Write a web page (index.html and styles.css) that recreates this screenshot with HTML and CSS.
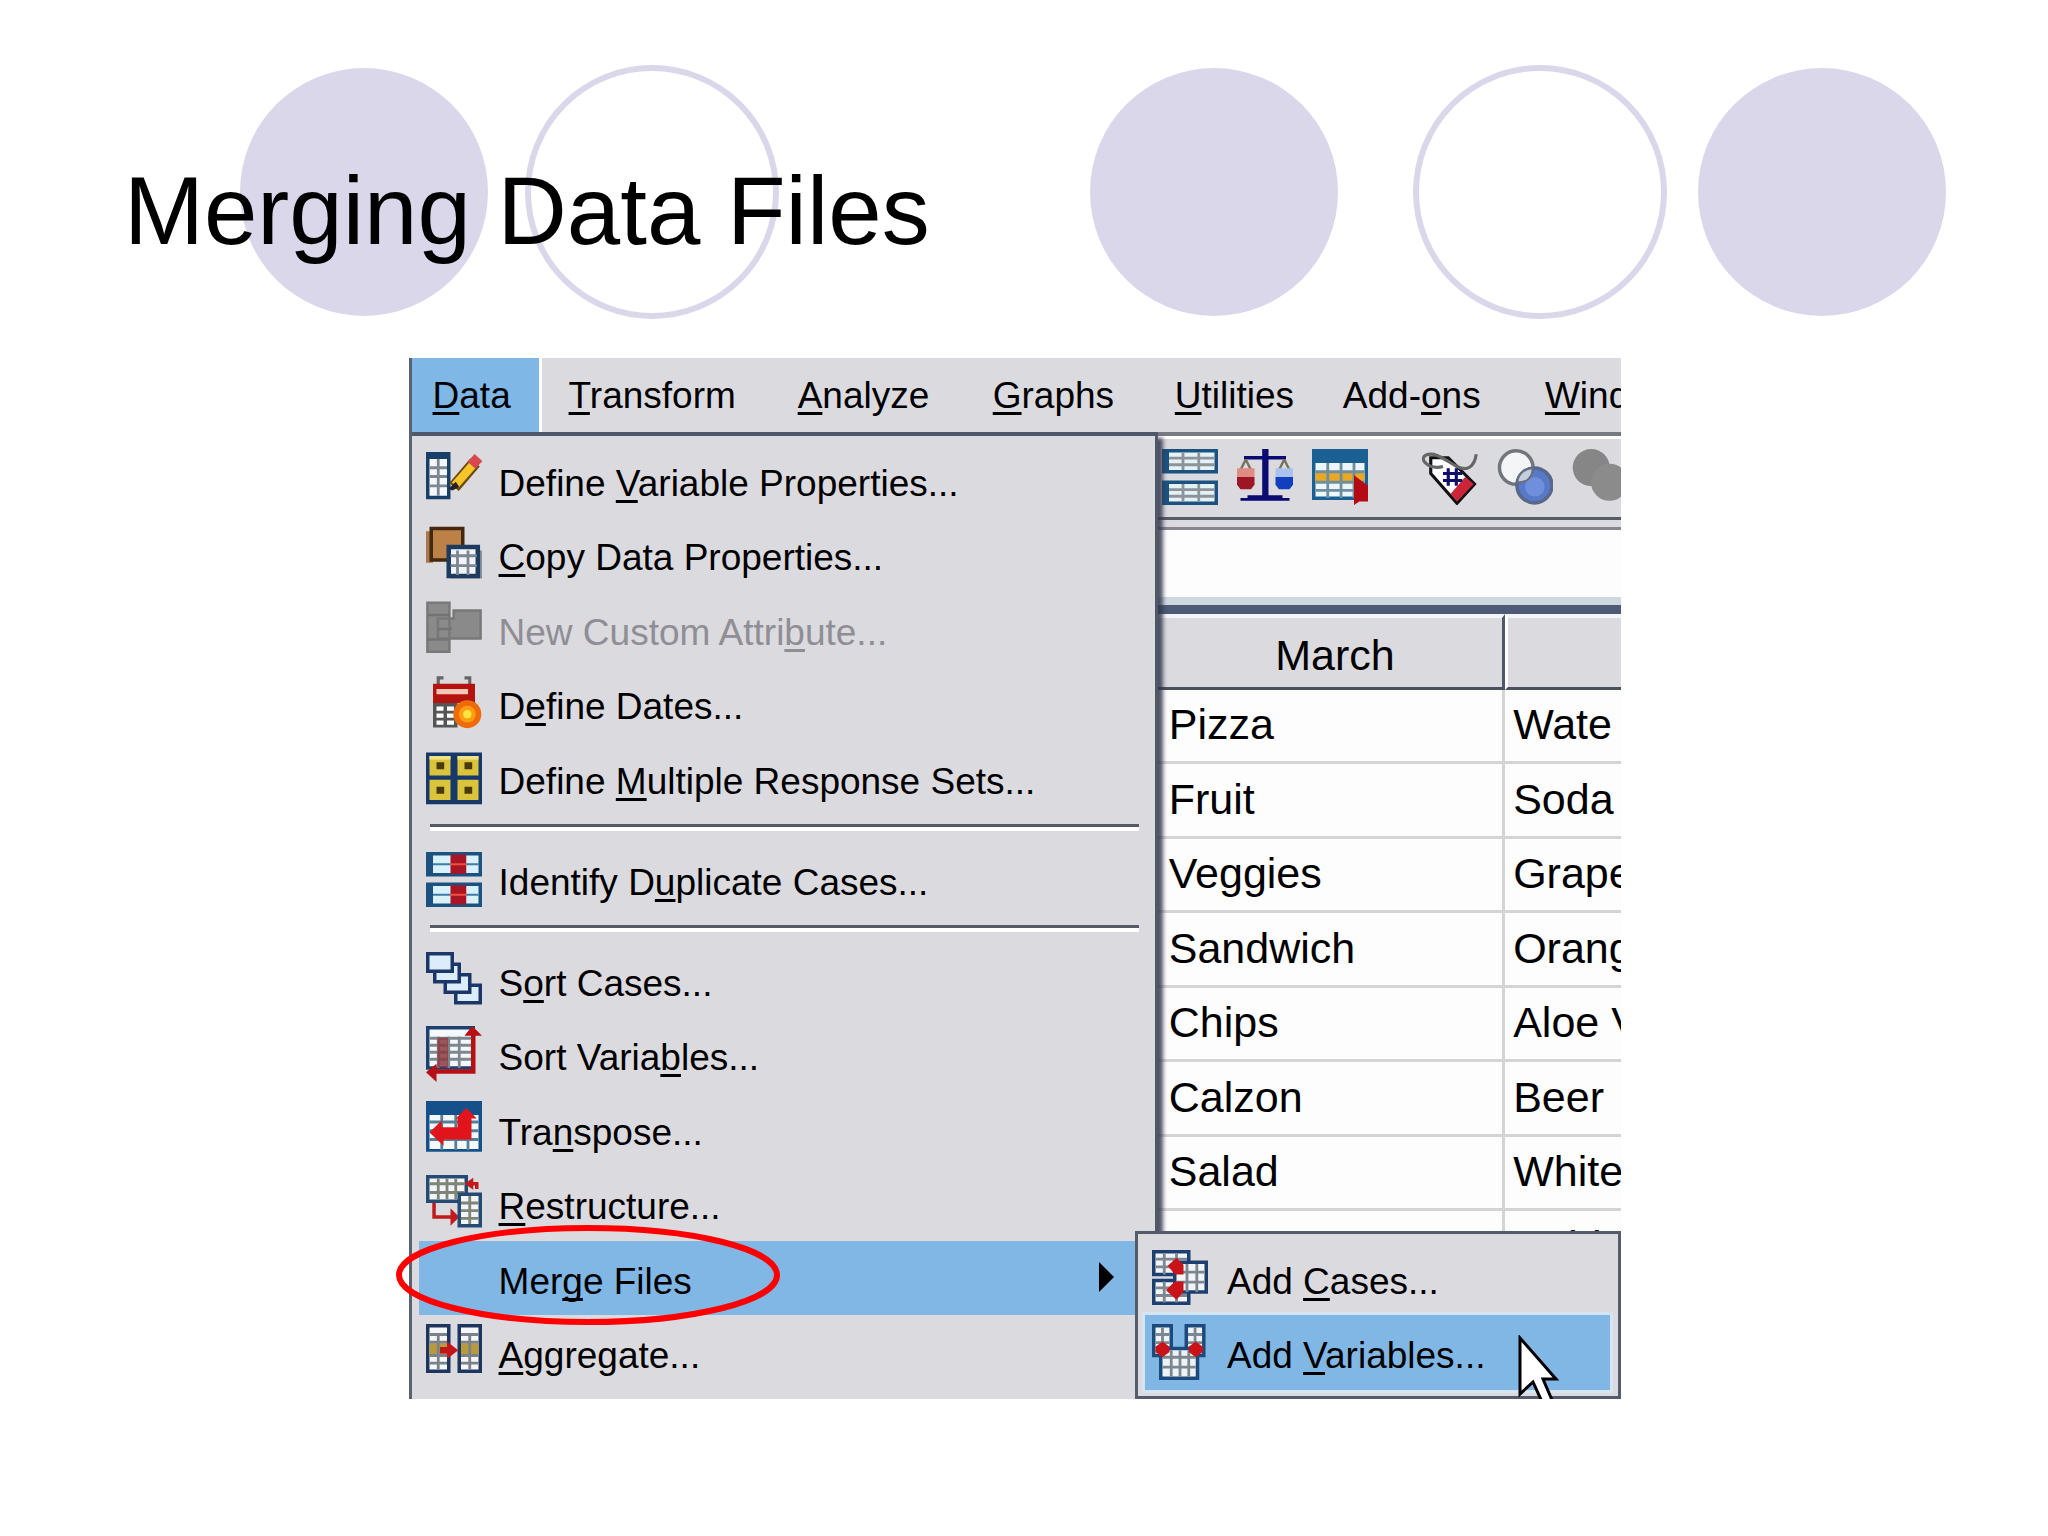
FILE: index.html
```html
<!DOCTYPE html>
<html lang="en">
<head>
<meta charset="utf-8">
<title>Merging Data Files</title>
<link rel="stylesheet" href="styles.css">
</head>
<body>
<main class="slide">
  <header class="slide-head">
    <svg class="circles" viewBox="0 0 2048 330" aria-hidden="true">
      <g fill="#dad7ea"><circle cx="364" cy="192" r="124"/><circle cx="1214" cy="192" r="124"/><circle cx="1822" cy="192" r="124"/></g>
      <g fill="none" stroke="#dad7ea" stroke-width="6"><circle cx="652" cy="192" r="124"/><circle cx="1540" cy="192" r="124"/></g>
    </svg>
    <h1 class="title">Merging Data Files</h1>
  </header>

  <div class="stage">
    <div class="app">
      <nav class="menubar" aria-label="Main menu">
        <button class="menubar-item open"><u>D</u>ata</button>
        <button class="menubar-item"><u>T</u>ransform</button>
        <button class="menubar-item"><u>A</u>nalyze</button>
        <button class="menubar-item"><u>G</u>raphs</button>
        <button class="menubar-item"><u>U</u>tilities</button>
        <button class="menubar-item">Add-<u>o</u>ns</button>
        <button class="menubar-item"><u>W</u>indow</button>
      </nav>

      <div class="body">
        <ul class="menu">
          <li><button class="item">
            <svg class="icon" viewBox="0 0 16 16"><path fill="#173f68" d="M0 0h7v13.500H0z"/><path fill="#f4f8fc" d="M1 2h5v10.500H1z"/><path stroke="#7d8790" stroke-width=".8" d="M3.500 2v10.500M1 4.500h5M1 7h5M1 9.700h5"/><path stroke="#6b4a12" stroke-width="3.600" d="M8 10l6-7"/><path stroke="#f5c52a" stroke-width="2.400" d="M8.300 9.500L13.600 3.400"/><path stroke="#d9484e" stroke-width="3" d="M13 3.800l2-2.200"/><path fill="#222" d="M6.500 10.500l2-2 1 1.500-2 1z"/></svg>
            <span>Define <u>V</u>ariable Properties...</span></button></li>
          <li><button class="item">
            <svg class="icon" viewBox="0 0 16 16"><path fill="#a9764a" d="M0 1.500h2v9H0z"/><path fill="#bb8147" stroke="#43280f" d="M1.500.7h9v9h-9z"/><path fill="#8b9098" d="M7 7h9v8H7z"/><path fill="#f1f5fa" stroke="#1d3b5f" stroke-width="1.300" d="M6.500 6h8.300v8.300H6.500z"/><path fill="none" stroke="#7d8790" stroke-width=".8" d="M9 7v7M12 7v7M7 8.500h7.500M7 11.300h7.500"/></svg>
            <span><u>C</u>opy Data Properties...</span></button></li>
          <li><button class="item" disabled>
            <svg class="icon" viewBox="0 0 16 16"><path fill="#8a8a8a" stroke="#787878" stroke-width=".7" d="M.4.500h6.300v14H.4zM3.400 5h4.500V2.700h7.700v8H3.400z"/><path fill="none" stroke="#737373" stroke-width=".7" d="M.4 4h6.300M.4 11h6.300M3.400 8h4"/></svg>
            <span>New Custom Attri<u>b</u>ute...</span></button></li>
          <li><button class="item">
            <svg class="icon" viewBox="0 0 16 16"><path fill="none" stroke="#666" stroke-width=".9" d="M5 .8H3.500v2M11 .8h1.500v2"/><path fill="#b3140f" d="M2 2.500h12v5.500H2z"/><path fill="#f6c7b4" d="M3 4h9v1.500H3z"/><path fill="#555" d="M2 8h7v7H2z"/><path fill="#fff" d="M3 9h2v1.200H3zM6 9h2v1.200H6zM3 11h2v1.200H3zM6 11h2v1.200H6zM3 13h2v1.200H3zM6 13h2v1.200H6z"/><circle cx="11.800" cy="11.200" r="4" fill="#ee6b0b"/><circle cx="11.800" cy="11.200" r="2.400" fill="#ff9d12"/><circle cx="11.800" cy="11.200" r="1.200" fill="#ffe63a"/></svg>
            <span>D<u>e</u>fine Dates...</span></button></li>
          <li><button class="item">
            <svg class="icon" viewBox="0 0 16 16"><path fill="#17386a" d="M0 .700h16v14.800H0z"/><path fill="#d9c43c" d="M1 1.700h6v5.600H1zM9 1.700h6v5.600H9zM1 8.500h6v5.800H1zM9 8.500h6v5.800H9z"/><path fill="#efe38a" d="M1 1.700h6v1H1zM9 1.700h6v1H9z"/><path fill="#4a3a0a" d="M3 3.500h2.200v2H3zM11 3.500h2.200v2H11zM3 10.500h2.200v2H3zM11 10.500h2.200v2H11z"/></svg>
            <span>Define <u>M</u>ultiple Response Sets...</span></button></li>
          <li class="rule" role="separator"></li>
          <li><button class="item">
            <svg class="icon" viewBox="0 0 16 16"><path fill="#1b527f" d="M0 .300h16v7H0zM0 9h16v7H0z"/><path fill="#d8f1fa" d="M2 1.300h13v5H2zM2 10h13v5H2z"/><path fill="#a81525" d="M7 1h4.500v5.500H7zM7 9.800h4.500v5.500H7z"/><path stroke="#3c7ea6" stroke-width=".6" d="M2 3.800h5M11.500 3.800H15M2 12.500h5M11.500 12.500H15"/><path stroke="#f0503c" stroke-width=".6" d="M7 3.800h4.500M7 12.500h4.500"/></svg>
            <span>Identify D<u>u</u>plicate Cases...</span></button></li>
          <li class="rule" role="separator"></li>
          <li><button class="item">
            <svg class="icon" viewBox="0 0 16 16"><g fill="#dcecfb" stroke="#1b3767"><path d="M8.500 9.500h7v5h-7z"/><path d="M5.500 6.500h7v5h-7z"/><path d="M2.500 3.500h7v5h-7z"/><path d="M.5.500h7v5h-7z"/></g></svg>
            <span>S<u>o</u>rt Cases...</span></button></li>
          <li><button class="item">
            <svg class="icon" viewBox="0 0 16 16"><path fill="#f4f8fc" stroke="#1d416f" d="M.5.500h13v11.500H.5z"/><path fill="none" stroke="#7d8790" stroke-width=".8" d="M1 3.500h12M1 5.500h12M1 7.500h12M1 9.500h12M3.500 3v9M6.500 3v9M9.500 3v9"/><path fill="#8c3a40" d="M3.300 3.300h3v8.500h-3z" opacity=".85"/><path fill="none" stroke="#b80f14" stroke-width="1.300" d="M13.500 2v11H2"/><path fill="#b80f14" d="M11 2.800L13.200 0 16 2.800zM3 10.800L0 13.200l3 2.800z"/></svg>
            <span>Sort Varia<u>b</u>les...</span></button></li>
          <li><button class="item">
            <svg class="icon" viewBox="0 0 16 16"><path fill="#15508a" d="M0 0h16v14.500H0z"/><path fill="#f2f8fc" d="M1 4h14v9.700H1z"/><path fill="none" stroke="#568098" stroke-width=".8" d="M1 6h14M1 8.500h14M1 11h14M4.500 4v10M8.500 4v10M12 4v10"/><path fill="#e0141a" d="M1 9l3.500-3.500v2H9V5h-.500L11.500 2l3 3H13v6H5v1.800z"/></svg>
            <span>Tra<u>n</u>spose...</span></button></li>
          <li><button class="item">
            <svg class="icon" viewBox="0 0 16 16"><path fill="#f1f5f7" stroke="#254b73" d="M.5.500h11v7H.5z"/><path fill="none" stroke="#7d8478" stroke-width=".8" d="M1 2.500h10M1 5h10M3.500 1v6M6 1v6M8.500 1v6"/><path fill="none" stroke="#c01a1c" d="M2.300 8v4H8M12 2.500h2.500V4"/><path fill="#c01a1c" d="M7 9.500l2.500 2.500L7 14.500zM13.500.800v3.400L11 2.500z"/><path fill="#f1f5f7" stroke="#254b73" d="M9.500 5.500h6v9h-6z"/><path fill="none" stroke="#7d8478" stroke-width=".8" d="M10 8h5M10 10.200h5M10 12.400h5M12.500 6v8"/></svg>
            <span><u>R</u>estructure...</span></button></li>
          <li><button class="item active" aria-haspopup="true" aria-expanded="true">
            <span class="icon"></span>
            <span>Mer<u>g</u>e Files</span>
            <svg class="arrow" viewBox="0 0 8 16"><path d="M0 0l8 8-8 8z"/></svg></button></li>
          <li><button class="item">
            <svg class="icon" viewBox="0 0 16 16"><g fill="#f4f6f7" stroke="#1d355f"><path d="M.5.500h6v13h-6zM9.500.500h6v13h-6z"/></g><path fill="#b79a3c" d="M1 5.500h5v3.500H1zM10 5.500h5v3.500h-5z"/><path fill="none" stroke="#7a8188" stroke-width=".8" d="M1 3h5M1 5.200h5M1 9h5M1 11.200h5M10 3h5M10 5.200h5M10 9h5M10 11.200h5M3.500 3v10M12.500 3v10"/><path fill="#c3141b" d="M4 6.600h2V5l3.200 2.500L6 10V8.400H4z"/></svg>
            <span><u>A</u>ggregate...</span></button></li>
        </ul>

        <section class="sheet">
          <div class="toolbar">
            <button class="tool" aria-label="Split file"><svg class="icon" viewBox="0 0 16 16"><path fill="#1b527f" d="M0 0h16v7H0zM0 9h16v7H0z"/><path fill="#e4f2f8" d="M2 1h13v5H2zM2 10h13v5H2z"/><path fill="none" stroke="#8d9499" stroke-width=".8" d="M2 2.600h13M2 4.500h13M2 11.600h13M2 13.500h13M6 1v5M10.500 1v5M6 10v5M10.500 10v5"/></svg></button>
            <button class="tool" aria-label="Weight cases"><svg class="icon" viewBox="0 0 16 16"><path fill="#0a0a70" d="M7.200 0h1.800v13.500h-1.800zM2 2h12v1H2zM1 14h14v.800H1zM3 13.200h10v1H3z"/><path fill="none" stroke="#77735f" stroke-width=".7" d="M2.500 3L.5 7M2.500 3l2 4M13.500 3l-2 4M13.500 3l2 4"/><path fill="#e08b83" d="M0 5.500h5V8H0z"/><path fill="#9c1626" d="M0 8h5v2.200L4 11.500H1L0 10.200z"/><path fill="#a9c3ec" d="M11 5.500h5V8h-5z"/><path fill="#123fbf" d="M11 8h5v2.200l-1 1.300h-3l-1-1.300z"/></svg></button>
            <button class="tool" aria-label="Select cases"><svg class="icon" viewBox="0 0 16 16"><path fill="#1b6093" d="M0 0h16v14.600H0z"/><path fill="#edf7fb" d="M1 4h14v9.600H1z"/><path fill="#e8a725" d="M1 6.700h14v2.600H1z"/><path fill="none" stroke="#6f8f9d" stroke-width=".8" d="M1 6.500h14M1 9.500h14M1 11.800h14M4.500 4v10M8.300 4v10M12 4v10"/><path fill="#b30a14" d="M12 7.500l4 3V15h-2.500l-1.500 1z"/></svg></button>
            <button class="tool spaced" aria-label="Value labels"><svg class="icon" viewBox="0 0 16 16"><path fill="#fff" stroke="#111" stroke-width=".9" d="M2.500 2.500h5L15 10l-5 5.500L2.500 7z"/><path fill="#cc2438" d="M12.300 8l2.500 2-4.800 5-1.800-2.200z"/><path fill="none" stroke="#666" stroke-width=".9" d="M6 5C2 6-1 3 1 1.800 4 .500 7 3.500 10 5s5 0 5.500-3.500"/><path fill="none" stroke="#10106c" stroke-width=".9" d="M7.500 5.500v5M9.800 5.500v5M6 7h5.500M6 9h5.500"/></svg></button>
            <button class="tool" aria-label="Use variable sets"><svg class="icon" viewBox="0 0 16 16"><circle cx="5.500" cy="5.300" r="4.800" fill="#f3f5f7" stroke="#71767c"/><circle cx="10.700" cy="10.400" r="5" fill="#5878c8" stroke="#59688a"/><circle cx="10.800" cy="10.800" r="2.800" fill="#6f8edb"/><path fill="#c6cedb" stroke="#666f80" stroke-width=".6" d="M5.800 9.500C6 7 8 5.500 10.200 5.500 10.200 8 8.500 9.800 5.800 9.500z"/></svg></button>
            <button class="tool" aria-label="Show all variables" disabled><svg class="icon" viewBox="0 0 16 16"><circle cx="5.500" cy="5.300" r="5.300" fill="#868686"/><circle cx="10.700" cy="9.500" r="5.300" fill="#8b8b8b"/></svg></button>
          </div>
          <input class="cell-editor" type="text" aria-label="Cell value">
          <table class="grid">
            <thead><tr><th>March</th><th></th></tr></thead>
            <tbody>
              <tr><td>Pizza</td><td>Wate</td></tr>
              <tr><td>Fruit</td><td>Soda</td></tr>
              <tr><td>Veggies</td><td>Grape</td></tr>
              <tr><td>Sandwich</td><td>Orange</td></tr>
              <tr><td>Chips</td><td>Aloe V</td></tr>
              <tr><td>Calzon</td><td>Beer</td></tr>
              <tr><td>Salad</td><td>White</td></tr>
              <tr><td>Soup</td><td>Nehi</td></tr>
            </tbody>
          </table>
        </section>
      </div>

      <ul class="submenu">
        <li><button class="item">
          <svg class="icon" viewBox="0 0 16 16"><g fill="#f1f4f8" stroke="#1c3f70"><path d="M.5.500h10v6.500H.5zM.5 8.700h10v6.500H.5z"/><path d="M9.500 3.500h6v8.500h-9V3.500z"/></g><path fill="none" stroke="#7d8790" stroke-width=".8" d="M1 2.600h9M1 4.800h5M3.500 1v6M7 1v2M1 10.800h5M1 13h9M3.500 9v6M7 12v3M7 6.300h8M7 9.200h8M10 4v8M12.800 4v8"/><path fill="#c81319" d="M4.500 4.500L7 2.200l2 2V7H6.500zM4 11.500L6.500 9H9v3l-2 2.200z"/></svg>
          <span>Add <u>C</u>ases...</span></button></li>
        <li><button class="item active">
          <svg class="icon" viewBox="0 0 16 16"><g fill="#eef3f8" stroke="#1c4a7c"><path d="M.5.500h5v8.500h-5zM9.800.500h5v8.500h-5z"/><path d="M2.500 7h10.500v8.500H2.500z"/></g><path fill="none" stroke="#7d8790" stroke-width=".8" d="M1 3h4M1 5.300h4M3 1v6M10.300 3h4M10.300 5.300h4M12.300 1v6M3 9.500h9.500M3 12.300h9.500M5.500 7.500V15M8 7.500V15M10.500 7.500V15"/><path fill="#c81319" d="M1 6.500L3 5l2 1.500V8L3 9.500 1 8zM10.500 6.500l2-1.500 2 1.500V8l-2 1.500-2-1.500z"/></svg>
          <span>Add <u>V</u>ariables...</span></button></li>
      </ul>

      <svg class="pointer" viewBox="0 0 42 64" aria-hidden="true"><path fill="#fff" stroke="#000" stroke-width="3" d="M2 3v56l13-12 10 22 9-4-9-21h13z"/></svg>
    </div>
    <svg class="callout" viewBox="0 0 384 100" aria-hidden="true"><ellipse cx="192" cy="50" rx="189" ry="47" fill="none" stroke="#f00" stroke-width="6"/></svg>
  </div>
</main>
</body>
</html>
```
FILE: styles.css
```css
* {
  box-sizing: border-box;
}

body {
  margin: 0;
  background: #fff;
  color: #000;
  font-family: "Liberation Sans", Arial, sans-serif;
}

button,
input {
  font: inherit;
  color: inherit;
  border: 0;
  border-radius: 0;
  background: none;
  padding: 0;
}

ul {
  list-style: none;
  margin: 0;
  padding: 0;
}

u {
  text-decoration-thickness: 3px;
  text-underline-offset: 4px;
  text-decoration-skip-ink: none;
}

.slide {
  padding-bottom: 136px;
}

/* Heading over the row of circles */
.slide-head {
  display: grid;
  align-items: start;
}

.circles,
.title {
  grid-area: 1 / 1;
}

.circles {
  display: block;
  width: 100%;
}

.title {
  margin: 0;
  padding: 155px 0 0 124px;
  font-size: 96px;
  font-weight: 400;
  line-height: 112px;
}

.stage {
  position: relative;
  width: 59.2%;
  margin: 28px 0 0 19.95%;
}

/* Application window */
.app {
  position: relative;
  overflow: hidden;
  border-left: 3px solid #596270;
  background: #dbdadf;
  font-size: 37px;
}

.menubar {
  display: grid;
  grid-template-columns: 130fr 229fr 195fr 182fr 168fr 202fr 103fr;
}

.menubar-item {
  min-width: 0;
  padding: 2px 0 0 27px;
  line-height: 72px;
  text-align: left;
  white-space: nowrap;
}

.menubar-item.open {
  padding-left: 21px;
  border-right: 3px solid #fff;
  background: #7fb7e6;
}

.body {
  display: grid;
  grid-template-columns: 61.7% 38.3%;
  height: 967px;
}

/* Drop-down menu */
.menu {
  position: relative;
  z-index: 1;
  padding: 7px 7px 0;
  border-top: 4px solid #505766;
  border-right: 3px solid #505766;
  background: #dbdadf;
  box-shadow: 5px 6px 4px rgba(50, 55, 75, 0.85);
}

.item {
  display: flex;
  width: 100%;
  height: 74px;
  padding: 8px 0 0 7px;
  line-height: 66px;
  text-align: left;
  white-space: nowrap;
}

.menu li:nth-child(even) .item {
  height: 75px;
}

.item:disabled {
  color: #8f8e95;
}

.item.active {
  background: #81b7e5;
}

.icon {
  display: block;
  flex: none;
  width: 56px;
  height: 56px;
}

.item .icon {
  margin: 1px 17px 0 0;
}

.arrow {
  width: 15px;
  height: 30px;
  margin: 13px 34px 0 auto;
}

.rule {
  height: 7px;
  margin: 9px 9px 11px 11px;
  border-top: 3px solid #565a64;
  border-bottom: 4px solid #fff;
}

/* Worksheet behind the menu */
.sheet {
  min-width: 0;
}

.toolbar {
  display: flex;
  gap: 19px;
  height: 88px;
  padding: 10px 0 0 4px;
  border-top: 4px solid #777984;
  border-bottom: 3px solid #565b69;
  box-shadow: inset 0 3px #fff;
}

.tool {
  flex: none;
  height: 56px;
  padding-top: 3px;
}

.tool.spaced {
  margin-left: 35px;
}

.cell-editor {
  display: block;
  width: 100%;
  height: 78px;
  margin: 7px 0 0;
  padding: 0 12px;
  border-top: 3px solid #85868f;
  border-bottom: 8px solid #d0d8df;
  background: #fdfdfe;
}

.grid {
  width: 100%;
  table-layout: fixed;
  border-collapse: separate;
  border-spacing: 0;
  border-top: 9px solid #4d5b76;
  font-size: 43px;
  text-align: left;
}

.grid th {
  height: 76px;
  padding: 4px 0 0;
  border-top: 4px solid #f4f5f8;
  border-bottom: 3px solid #4a505e;
  background: #dadadf;
  font-weight: 400;
  line-height: 60px;
  text-align: center;
}

.grid th:first-child {
  width: 75%;
  padding-left: 10px;
  border-right: 3px solid #505766;
}

.grid th:last-child {
  border-left: 3px solid #fff;
}

.grid td {
  height: 74px;
  padding: 0 0 3px 8px;
  overflow: hidden;
  border-bottom: 3px solid #d4d4d7;
  background: #fdfdfe;
  line-height: 68px;
  white-space: nowrap;
}

.grid tr:nth-child(even) td {
  height: 75px;
}

.grid td:first-child {
  padding-left: 11px;
  border-right: 3px solid #d4d4d7;
}

/* Cascading menu, over the worksheet */
.submenu {
  position: absolute;
  right: 0;
  bottom: 0;
  z-index: 2;
  width: 486px;
  padding: 7px 8px 6px 7px;
  border: 3px solid #565b6b;
  background: #dbdadf;
}

.submenu .item {
  padding-left: 7px;
}

.submenu .item .icon {
  margin-right: 19px;
}

.submenu .active {
  height: 75px;
  box-shadow: 0 0 0 3px #d5e4f3;
}

.pointer {
  position: absolute;
  right: 61px;
  bottom: 0;
  z-index: 3;
  width: 42px;
  height: 64px;
}

/* Ellipse drawn round the Merge Files entry */
.callout {
  position: absolute;
  left: -13px;
  bottom: 74px;
  z-index: 4;
  width: 384px;
  height: 100px;
}
```
